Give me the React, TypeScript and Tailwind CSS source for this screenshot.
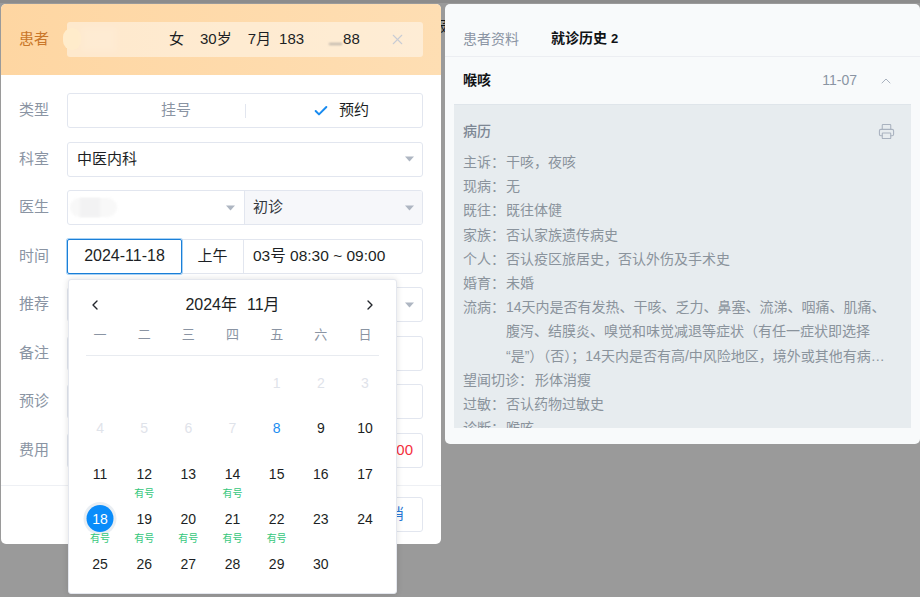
import { Check, ChevronLeft, ChevronRight, ChevronUp, Printer, X } from 'lucide-react';

const font = 'font-["Liberation_Sans","Noto_Sans_CJK_SC",sans-serif]';

function Caret({ className = '' }: { className?: string }) {
  return (
    <svg width="9" height="6" viewBox="0 0 9 6" className={className}>
      <path d="M0 0.5h9L4.5 5.5z" fill="#aeb6c2" />
    </svg>
  );
}

function FormRow({ label, children }: { label: string; children: React.ReactNode }) {
  return (
    <div className="flex h-[35px] items-center">
      <span className="w-[48px] shrink-0 text-[15px] text-[#8a94a3]">{label}</span>
      {children}
    </div>
  );
}

function Field({ children, className = '' }: { children?: React.ReactNode; className?: string }) {
  return (
    <div className={`flex h-full min-w-0 flex-1 items-center rounded-[3px] border border-[#e2e6ef] bg-white ${className}`}>
      {children}
    </div>
  );
}

// full-width punctuation, as in the record text
const colon = '\uFF1A';
const comma = '\uFF0C';
const epidemic =
  '14天内是否有发热、干咳、乏力、鼻塞、流涕、咽痛、肌痛、腹泻、结膜炎、嗅觉和味觉减退等症状\uFF08有任一症状即选择\u200B\u201C是\u201D\uFF09\uFF08否\uFF09\uFF1B14天内是否有高/中风险地区' +
  comma +
  '境外或其他有病例报告地区旅居史';

const history: [string, string][] = [
  ['主诉', `干咳${comma}夜咳`],
  ['现病', '无'],
  ['既往', '既往体健'],
  ['家族', '否认家族遗传病史'],
  ['个人', `否认疫区旅居史${comma}否认外伤及手术史`],
  ['婚育', '未婚'],
];

const weekDays = ['一', '二', '三', '四', '五', '六', '日'];
const available = [12, 14, 18, 19, 20, 21, 22];

function Calendar() {
  const blanks = Array.from({ length: 4 });
  const days = Array.from({ length: 30 }, (_, i) => i + 1);
  return (
    <div className="absolute left-[68px] top-[279px] z-10 h-[315px] w-[329px] rounded-[3px] border border-[#e4e7ee] bg-white shadow-[0_0_6px_rgba(0,0,0,0.12)]">
      <div className="flex h-[48px] items-center justify-between px-[18px] pt-[1px] text-[16px] text-[#1c1f24]">
        <ChevronLeft size={16} strokeWidth={2} className="text-[#22262c]" />
        <span className="flex gap-[10px]">
          <span>2024年</span>
          <span>11月</span>
        </span>
        <ChevronRight size={16} strokeWidth={2} className="text-[#22262c]" />
      </div>
      <div className="mx-[9px] grid h-[20px] grid-cols-7 text-center text-[13px] leading-[14px] text-[#8a94a3]">
        {weekDays.map((d) => (
          <span key={d}>{d}</span>
        ))}
      </div>
      <div className="mx-[17px] mt-[7px] h-px bg-[#e8ebf0]" />
      <div className="mx-[9px] mt-[6px] grid grid-cols-7 auto-rows-[45.25px]">
        {blanks.map((_, i) => (
          <div key={i} />
        ))}
        {days.map((d) => {
          const disabled = d < 8;
          const selected = d === 18;
          const today = d === 8;
          return (
            <div key={d} className="relative flex flex-col items-center pt-[11px] text-[14px] leading-[20px]">
              {selected && (
                <span className="absolute left-1/2 top-[7.5px] h-[27px] w-[27px] -translate-x-1/2 rounded-full bg-[#0a8cfa] shadow-[0_0_0_3px_#e9eef3]" />
              )}
              <span
                className={`relative ${
                  selected ? 'text-white' : disabled ? 'text-[#dfe3ea]' : today ? 'text-[#1a8cf0]' : 'text-[#1c1f24]'
                }`}
              >
                {d}
              </span>
              {available.includes(d) && (
                <span className="relative mt-[3px] text-[10px] leading-[14px] text-[#34c77b]">有号</span>
              )}
            </div>
          );
        })}
      </div>
    </div>
  );
}

export default function App() {
  return (
    <div className={`relative flex h-[597px] w-[920px] items-start gap-[4px] overflow-hidden bg-[#9a9a9a] pl-[1px] pt-[4px] ${font}`}>
      <div className="absolute inset-x-0 top-0 h-[3px] bg-[#8c8c8c]" />
      <span className="absolute left-[433px] top-[16px] text-[14px] text-[#15171a]">服</span>

      <div className="relative flex h-[540px] w-[440px] shrink-0 flex-col overflow-hidden rounded-[5px] bg-white">
        <div className="flex h-[71px] items-center bg-gradient-to-r from-[#fed6a2] to-[#fedeb3] px-[18px]">
          <span className="w-[48px] shrink-0 text-[15px] text-[#c9772a]">患者</span>
          <div className="relative flex h-[35px] flex-1 items-center rounded-[3px] bg-white/45 text-[15px] text-[#1c1f24]">
            <span className="absolute left-[-4px] top-[6px] h-[22px] w-[18px] rounded-full bg-[#ffeccb]" />
            <span className="absolute left-[14px] top-[5px] h-[25px] w-[36px] bg-white/10 blur-[3px]" />
            <span className="ml-[102px]">女</span>
            <span className="ml-[16px]">30岁</span>
            <span className="ml-[16px]">7月</span>
            <span className="ml-[8px]">183</span>
            <span className="ml-[39px]">88</span>
            <span className="absolute left-[262px] top-[21px] h-[2px] w-[13px] bg-[#b9b2a8] blur-[1px]" />
            <X size={17} strokeWidth={1.5} className="ml-auto mr-[17px] text-[#c8ccd4]" />
          </div>
        </div>
        <div className="flex flex-col gap-[13.5px] px-[18px] pt-[18px]">
          <FormRow label="类型">
            <Field>
              <div className="flex w-[177px] justify-center pl-[39px] text-[15px] text-[#8a94a3]">挂号</div>
              <div className="h-[14px] w-px bg-[#e2e6ef]" />
              <div className="flex flex-1 items-center justify-center gap-[10px] pl-[14px] text-[15px] text-[#1c1f24]">
                <Check size={16} strokeWidth={3} className="text-[#1a8cf0]" />
                预约
              </div>
            </Field>
          </FormRow>
          <FormRow label="科室">
            <Field className="justify-between pl-[9px] pr-[8px] text-[15px] text-[#1c1f24]">
              中医内科
              <Caret />
            </Field>
          </FormRow>
          <FormRow label="医生">
            <Field className="overflow-hidden">
              <div className="relative flex h-full w-[177px] items-center justify-end border-r border-[#e2e6ef] pr-[9px]">
                <span className="absolute left-[2px] top-[7px] h-[19px] w-[47px] rounded-full bg-[#f8f8f8] blur-[1px]" />
                <span className="absolute left-[12px] top-[7px] h-[19px] w-[20px] bg-[#f2f2f3] blur-[1px]" />
                <Caret />
              </div>
              <div className="flex h-full flex-1 items-center justify-between bg-[#f6f7fa] pl-[8px] pr-[8px] text-[15px] text-[#33373d]">
                初诊
                <Caret />
              </div>
            </Field>
          </FormRow>
          <FormRow label="时间">
            <Field>
              <div className="relative -my-px -ml-px flex h-[35px] w-[115px] items-center justify-center rounded-[2px] border border-[#1a7fd8] text-[16px] text-[#1c1f24] shadow-[0_0_0_1px_#a8d2f5]">
                2024-11-18
              </div>
              <div className="flex h-full w-[62px] items-center justify-center border-r border-[#e2e6ef] text-[15px] text-[#1c1f24]">
                上午
              </div>
              <div className="pl-[9px] text-[15.5px] text-[#1c1f24]">03号 08:30 ~ 09:00</div>
            </Field>
          </FormRow>
          <FormRow label="推荐">
            <Field className="justify-end pr-[8px]">
              <Caret />
            </Field>
          </FormRow>
          <FormRow label="备注">
            <Field />
          </FormRow>
          <FormRow label="预诊">
            <Field />
          </FormRow>
          <FormRow label="费用">
            <Field className="justify-end pr-[9px] text-[15px] text-[#f5303d]">0.00</Field>
          </FormRow>
        </div>
        <div className="mt-[17px] flex h-[59px] items-center justify-end border-t border-[#eef0f4] pr-[18px]">
          <div className="flex h-[35px] w-[80px] items-center justify-end rounded-[3px] border border-[#e2e6ef] pr-[18px] text-[15px] text-[#2a78d6]">
            取消
          </div>
        </div>
      </div>

      <div className="relative flex h-[440px] flex-1 flex-col rounded-[5px] bg-[#f8fafb]">
        <div className="flex h-[53px] items-end gap-[32px] border-b border-[#eceef2] px-[18px] pb-[7px] text-[14px] leading-[20px]">
          <span className="text-[#8a94a3]">患者资料</span>
          <span className="font-bold text-[#111316]">
            就诊历史 <span className="text-[13px]">2</span>
          </span>
        </div>
        <div className="flex h-[47px] items-center justify-between pl-[18px] pr-[26px]">
          <span className="text-[14px] font-bold text-[#111316]">喉咳</span>
          <div className="flex items-center gap-[21px] text-[14px] text-[#8a94a3]">
            11-07
            <ChevronUp size={16} strokeWidth={1.5} className="text-[#a9b2bf]" />
          </div>
        </div>
        <div className="mx-[9px] h-[324px] overflow-hidden border-t border-[#dfe5ea] bg-[#e7ecef] px-[9px] text-[14px] leading-[24.2px] text-[#8a939c]">
          <div className="flex h-[52px] items-center justify-between pr-[7px] font-medium text-[#7d8794]">
            <span className="text-[14px]">病历</span>
            <Printer size={17} strokeWidth={1.5} className="text-[#a9b2bf]" />
          </div>
          <div className="-mt-[7px]">
            {history.map(([k, v]) => (
              <div key={k} className="flex">
                <span className="w-[43px] shrink-0">
                  {k}
                  {colon}
                </span>
                <span>{v}</span>
              </div>
            ))}
            <div className="flex">
              <span className="w-[43px] shrink-0">流病{colon}</span>
              <span className="line-clamp-3 w-[391px]">{epidemic}</span>
            </div>
            <div className="flex">
              <span className="mr-[2px] shrink-0">望闻切诊{colon}</span>
              <span>形体消瘦</span>
            </div>
            <div className="flex">
              <span className="w-[43px] shrink-0">过敏{colon}</span>
              <span>否认药物过敏史</span>
            </div>
            <div className="flex">
              <span className="w-[43px] shrink-0">诊断{colon}</span>
              <span>喉咳</span>
            </div>
          </div>
        </div>
      </div>

      <Calendar />
    </div>
  );
}
